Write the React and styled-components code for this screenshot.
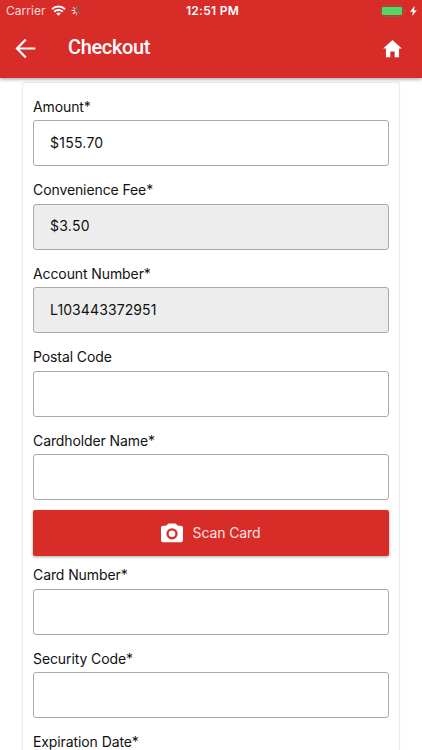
import React from 'react';
import styled, { createGlobalStyle } from 'styled-components';

const GlobalStyle = createGlobalStyle`
  * {
    box-sizing: border-box;
  }

  body {
    margin: 0;
    background: #fff;
    color: #111;
    font-family: Inter, "Liberation Sans", sans-serif;
  }
`;

const Screen = styled.div`
  display: flex;
  flex-direction: column;
  height: 750px;
  overflow: hidden;
`;

const Header = styled.header`
  flex: none;
  height: 77.5px;
  background: #d82c28;
  color: #fff;
  box-shadow: 0 1px 4px rgba(0, 0, 0, 0.4);
  z-index: 1;
`;

const StatusBar = styled.div`
  display: grid;
  grid-template-columns: 1fr auto 1fr;
  align-items: center;
  height: 22px;
  padding: 0 5px 1px 6px;
  font-size: 12px;
`;

const StatusGroup = styled.div`
  display: flex;
  align-items: center;
  justify-content: ${props => props.$end ? 'flex-end' : 'flex-start'};
  gap: ${props => props.$end ? '4px' : '5px'};
`;

const Carrier = styled.span`
  color: #f9dcdb;
  letter-spacing: 0.05px;
`;

const Time = styled.span`
  margin-left: 2px;
  font-weight: 600;
  letter-spacing: 0.3px;
`;

const Toolbar = styled.div`
  display: flex;
  align-items: center;
  height: 52px;
  padding: 0 18px 0 15px;
`;

const IconButton = styled.button`
  display: flex;
  padding: 0;
  border: none;
  background: none;
  color: inherit;
  cursor: pointer;
`;

const Title = styled.h1`
  flex: 1;
  margin: 0 0 2px 32px;
  font: 500 20px/24px Roboto, sans-serif;
  letter-spacing: -0.35px;
`;

const Card = styled.main`
  flex: 1;
  min-height: 0;
  margin: 4px 22px 0;
  padding: 10px 10px 0;
  border: 1px solid #ececec;
  border-bottom: none;
  border-radius: 3px 3px 0 0;
  box-shadow: 0 0 2px rgba(0, 0, 0, 0.06);
`;

const FieldGroup = styled.div`
  padding-bottom: 10px;
`;

const Label = styled.label`
  display: block;
  height: 27.5px;
  font-size: 14px;
  line-height: 27.5px;
  letter-spacing: -0.1px;
`;

const Input = styled.input`
  display: block;
  width: 100%;
  height: 46px;
  padding: 0 16px 2px;
  border: 1px solid #a9a9a9;
  border-radius: 3px;
  outline: none;
  background: ${props => props.readOnly ? '#ededed' : '#fff'};
  color: inherit;
  font: 14px Inter, "Liberation Sans", sans-serif;
  letter-spacing: ${props => props.$money ? '0.25px' : '0.1px'};
`;

const ScanButton = styled.button`
  display: flex;
  align-items: center;
  justify-content: center;
  gap: 10px;
  width: 100%;
  height: 46px;
  margin-bottom: 5px;
  padding: 0 1px 1px 0;
  border: none;
  border-radius: 2px;
  background: #d82c28;
  color: #fbe3e2;
  box-shadow: 0 1px 3px rgba(0, 0, 0, 0.35);
  font: 14px Inter, "Liberation Sans", sans-serif;
  letter-spacing: -0.1px;
  cursor: pointer;
`;

const WifiIcon = () => (
  <svg width="15" height="11" viewBox="0 0 15 11" fill="none" stroke="#fff" strokeWidth="2">
    <path d="M1 4.3a9.2 9.2 0 0 1 13 0" />
    <path d="M3.3 6.8a6 6 0 0 1 8.4 0" />
    <path d="M7.5 10.8L5.2 8.5a3.3 3.3 0 0 1 4.6 0z" fill="#fff" stroke="none" />
  </svg>
);

const SpinnerIcon = () => (
  <svg width="11" height="11" viewBox="0 0 11 11" strokeWidth="1.2" strokeLinecap="round">
    {['#8a7478', '#6a6066', '#6a6066', '#7d6a6e', '#c9a3a3', '#fff', '#fff', '#e8c4c3'].map((color, index) => (
      <path
        key={index}
        d="M5.5 3.4V1"
        stroke={color}
        transform={`rotate(${index * 45} 5.5 5.5)`}
      />
    ))}
  </svg>
);

const BatteryIcon = () => (
  <svg width="26" height="12" viewBox="0 0 26 12">
    <rect x="0.5" y="0.5" width="23" height="11" rx="2.5" fill="none" stroke="#955653" />
    <rect x="2" y="2" width="20" height="8" rx="1" fill="#4cd964" />
    <path d="M24.6 4v4q1.2-.6 1.2-2t-1.2-2z" fill="#955653" />
  </svg>
);

const BoltIcon = () => (
  <svg width="7" height="10" viewBox="0 0 7 10" fill="#fff">
    <path d="M4.6 0L0 5.8h2.9L2.2 10 6.8 4.2H4z" />
  </svg>
);

const BackIcon = () => (
  <svg width="21" height="20" viewBox="0 0 21 20" fill="none" stroke="#fff" strokeWidth="2.2">
    <path d="M20.3 10.5H2.2M10.8 1.5L2 10.5l8.8 9" />
  </svg>
);

const HomeIcon = () => (
  <svg width="23" height="23" viewBox="0 0 512 512" fill="#fff">
    <path d="M208 448V320h96v128h97.6V256H464L256 64 48 256h62.4v192z" />
  </svg>
);

const CameraIcon = () => (
  <svg width="22" height="20" viewBox="0 0 22 20" fill="#fff" fillRule="evenodd">
    <path d="M8 .5h6a2 2 0 0 1 1.4.7L17 2.8h3a2 2 0 0 1 2 2v12.4a2 2 0 0 1-2 2H2a2 2 0 0 1-2-2V4.8a2 2 0 0 1 2-2h3l1.6-1.6A2 2 0 0 1 8 .5zM11 5.2a5.6 5.6 0 1 0 0 11.2 5.6 5.6 0 0 0 0-11.2z" />
    <circle cx="11" cy="10.8" r="3.3" />
  </svg>
);

const accountFields = [
  { name: 'amount', label: 'Amount*', value: '$155.70', money: true },
  { name: 'fee', label: 'Convenience Fee*', value: '$3.50', money: true, readOnly: true },
  { name: 'account', label: 'Account Number*', value: 'L103443372951', readOnly: true },
  { name: 'postal', label: 'Postal Code' },
  { name: 'holder', label: 'Cardholder Name*' },
];

const cardFields = [
  { name: 'card', label: 'Card Number*' },
  { name: 'security', label: 'Security Code*' },
  { name: 'expiration', label: 'Expiration Date*' },
];

const Field = ({ name, label, value = '', money, readOnly }) => (
  <FieldGroup>
    <Label htmlFor={name}>{label}</Label>
    <Input id={name} name={name} defaultValue={value} readOnly={readOnly} $money={money} />
  </FieldGroup>
);

const App = () => {
  return (
    <Screen>
      <GlobalStyle />
      <Header>
        <StatusBar>
          <StatusGroup>
            <Carrier>Carrier</Carrier>
            <WifiIcon />
            <SpinnerIcon />
          </StatusGroup>
          <Time>12:51 PM</Time>
          <StatusGroup $end>
            <BatteryIcon />
            <BoltIcon />
          </StatusGroup>
        </StatusBar>
        <Toolbar>
          <IconButton aria-label="Back"><BackIcon /></IconButton>
          <Title>Checkout</Title>
          <IconButton aria-label="Home"><HomeIcon /></IconButton>
        </Toolbar>
      </Header>

      <Card>
        {accountFields.map(field => <Field key={field.name} {...field} />)}
        <ScanButton>
          <CameraIcon />
          Scan Card
        </ScanButton>
        {cardFields.map(field => <Field key={field.name} {...field} />)}
      </Card>
    </Screen>
  );
};

export default App;
